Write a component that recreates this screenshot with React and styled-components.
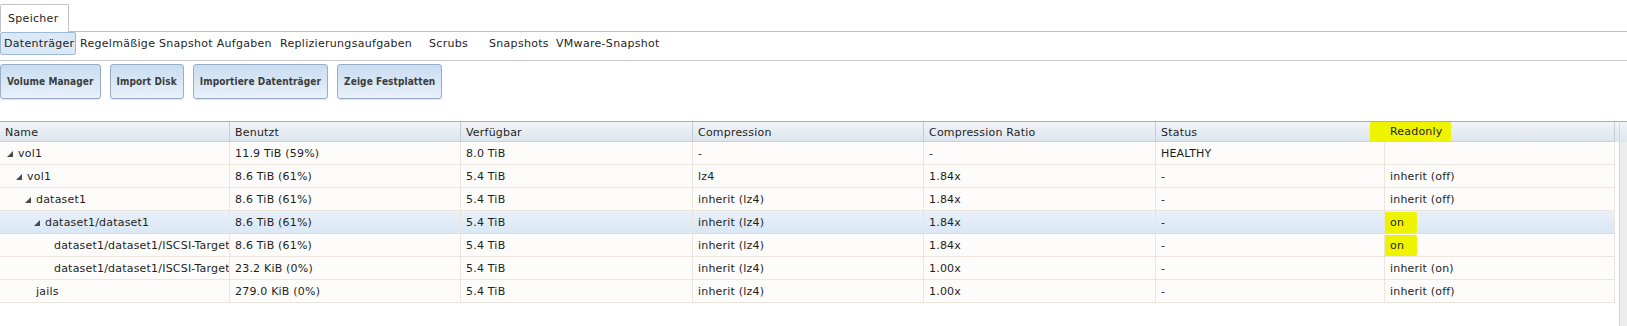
import React from "react";
import styled, { createGlobalStyle } from "styled-components";

const GlobalStyle = createGlobalStyle`
  body {
    margin: 0;
    background: #ffffff;
    font-family: "DejaVu Sans", Verdana, sans-serif;
    font-size: 11px;
    color: #1e1e1e;
  }
`;

const COLS = "230px 231px 232px 231px 232px 229px 230px";

const columns = [
  "Name",
  "Benutzt",
  "Verfügbar",
  "Compression",
  "Compression Ratio",
  "Status",
  "Readonly",
];

const rows = [
  { name: "vol1", level: 0, open: true, used: "11.9 TiB (59%)", avail: "8.0 TiB", comp: "-", ratio: "-", status: "HEALTHY", ro: "" },
  { name: "vol1", level: 1, open: true, used: "8.6 TiB (61%)", avail: "5.4 TiB", comp: "lz4", ratio: "1.84x", status: "-", ro: "inherit (off)" },
  { name: "dataset1", level: 2, open: true, used: "8.6 TiB (61%)", avail: "5.4 TiB", comp: "inherit (lz4)", ratio: "1.84x", status: "-", ro: "inherit (off)" },
  { name: "dataset1/dataset1", level: 3, open: true, selected: true, used: "8.6 TiB (61%)", avail: "5.4 TiB", comp: "inherit (lz4)", ratio: "1.84x", status: "-", ro: "on", mark: true },
  { name: "dataset1/dataset1/ISCSI-Target", level: 4, used: "8.6 TiB (61%)", avail: "5.4 TiB", comp: "inherit (lz4)", ratio: "1.84x", status: "-", ro: "on", mark: true },
  { name: "dataset1/dataset1/ISCSI-Target2", level: 4, used: "23.2 KiB (0%)", avail: "5.4 TiB", comp: "inherit (lz4)", ratio: "1.00x", status: "-", ro: "inherit (on)" },
  { name: "jails", level: 2, used: "279.0 KiB (0%)", avail: "5.4 TiB", comp: "inherit (lz4)", ratio: "1.00x", status: "-", ro: "inherit (off)" },
];

const subtabs = [
  { label: "Datenträger", w: 76 },
  { label: "Regelmäßige Snapshot Aufgaben", w: 200 },
  { label: "Replizierungsaufgaben", w: 149 },
  { label: "Scrubs", w: 60 },
  { label: "Snapshots", w: 67 },
  { label: "VMware-Snapshot", w: 112 },
];

const buttons = [
  "Volume Manager",
  "Import Disk",
  "Importiere Datenträger",
  "Zeige Festplatten",
];

const Expander = () => (
  <svg width="6" height="6" viewBox="0 0 6 6">
    <polygon points="0,6 6,0 6,6" fill="#4a4a4a" />
  </svg>
);

const App = () => {
  return (
    <Page>
      <GlobalStyle />
      <TabStrip>
        <Tab>Speicher</Tab>
      </TabStrip>
      <SubtabBar>
        {subtabs.map((t, i) => (
          <Subtab key={t.label} w={t.w} active={i === 0}>
            {t.label}
          </Subtab>
        ))}
      </SubtabBar>
      <ButtonBar>
        {buttons.map((label) => (
          <ActionButton key={label}>{label}</ActionButton>
        ))}
      </ButtonBar>
      <TableWrap>
        <Grid>
          <HeaderRow>
            {columns.map((col) => (
              <HeaderCell key={col}>
                {col === "Readonly" ? <Marker>{col}</Marker> : col}
              </HeaderCell>
            ))}
          </HeaderRow>
          {rows.map((row, i) => (
            <Row key={i} selected={row.selected}>
              <NameCell level={row.level}>
                <Toggle>{row.open ? <Expander /> : null}</Toggle>
                <Clip>{row.name}</Clip>
              </NameCell>
              <Cell>{row.used}</Cell>
              <Cell>{row.avail}</Cell>
              <Cell>{row.comp}</Cell>
              <Cell>{row.ratio}</Cell>
              <Cell>{row.status}</Cell>
              <Cell>{row.mark ? <OnMark>{row.ro}</OnMark> : row.ro}</Cell>
            </Row>
          ))}
        </Grid>
        <Gutter>
          <GutterHead />
        </Gutter>
        <Scrollbar>
          <ScrollHead />
        </Scrollbar>
      </TableWrap>
    </Page>
  );
};

const Page = styled.div`
  width: 1627px;
  height: 326px;
  overflow: hidden;
`;

const TabStrip = styled.div`
  display: flex;
  align-items: flex-end;
  height: 32px;
  padding-top: 3px;
  box-sizing: border-box;
  border-bottom: 1px solid #bfbfbf;
`;

const Tab = styled.div`
  width: 69px;
  height: 28px;
  box-sizing: border-box;
  margin-bottom: -1px;
  padding-left: 7px;
  line-height: 27px;
  background: #ffffff;
  border: 1px solid #c4c4c4;
  border-bottom: none;
  border-radius: 2px 2px 0 0;
  letter-spacing: 0.3px;
  color: #1e1e1e;
`;

const SubtabBar = styled.div`
  display: flex;
  align-items: flex-start;
  height: 28px;
  border-bottom: 1px solid #c9c9c9;
`;

const Subtab = styled.div`
  width: ${(p) => p.w}px;
  flex: none;
  height: 23px;
  box-sizing: border-box;
  padding-left: 3px;
  line-height: 21px;
  border: 1px solid ${(p) => (p.active ? "#9db9d8" : "transparent")};
  border-radius: 2px;
  background: ${(p) => (p.active ? "#dbe8f8" : "transparent")};
  letter-spacing: 0.3px;
  color: #1e1e1e;
  white-space: nowrap;
`;

const ButtonBar = styled.div`
  display: flex;
  gap: 9px;
  padding-top: 3px;
  margin-bottom: 22px;
`;

const ActionButton = styled.button`
  height: 35px;
  padding: 0 6px;
  border: 1px solid #98adc6;
  border-radius: 3px;
  background: linear-gradient(#c8dcf1, #e9f1fb);
  box-shadow: 0 1px 1px rgba(0, 0, 0, 0.12);
  font-family: "DejaVu Sans Condensed", "DejaVu Sans", sans-serif;
  font-weight: bold;
  font-size: 10px;
  letter-spacing: 0.1px;
  color: #3c3c3c;
  cursor: pointer;
`;

const TableWrap = styled.div`
  display: flex;
  align-items: stretch;
  height: 205px;
`;

const Grid = styled.div`
  width: 1615px;
`;

const HeaderRow = styled.div`
  display: grid;
  grid-template-columns: ${COLS};
  height: 21px;
  box-sizing: border-box;
  border-top: 1px solid #a7b0ba;
  border-bottom: 1px solid #c9d2dc;
  background: linear-gradient(#f1f4f8, #dde5ee);
`;

const HeaderCell = styled.div`
  display: flex;
  align-items: center;
  padding-left: 5px;
  border-right: 1px solid #c4ccd5;
  letter-spacing: 0.2px;
  color: #1e1e1e;
  white-space: nowrap;
`;

const Row = styled.div`
  display: grid;
  grid-template-columns: ${COLS};
  height: 23px;
  box-sizing: border-box;
  border-bottom: 1px solid ${(p) => (p.selected ? "#d3dfec" : "#ece5dc")};
  background: ${(p) =>
    p.selected ? "linear-gradient(#e8f0fa, #dae7f5)" : "#fdfcfa"};
`;

const Cell = styled.div`
  display: flex;
  align-items: center;
  padding-left: 5px;
  border-right: 1px solid #ece5dc;
  white-space: nowrap;
  overflow: hidden;
  letter-spacing: 0.2px;
  color: #1e1e1e;
`;

const NameCell = styled(Cell)`
  padding-left: ${(p) => 7 + p.level * 9}px;
  padding-right: 0;
`;

const Toggle = styled.span`
  display: inline-flex;
  align-items: center;
  width: 11px;
  flex: none;
  margin-top: 2px;
`;

const Clip = styled.span`
  overflow: hidden;
  white-space: nowrap;
`;

const Marker = styled.span`
  margin-left: -20px;
  padding: 3px 8px 4px 20px;
  background: #eef400;
  border-radius: 2px;
`;

const OnMark = styled.span`
  margin-left: -12px;
  padding: 4px 13px 4px 12px;
  background: #eef400;
  border-radius: 2px;
`;

const Gutter = styled.div`
  width: 4px;
`;

const GutterHead = styled.div`
  height: 21px;
  box-sizing: border-box;
  border-top: 1px solid #a7b0ba;
  background: linear-gradient(#f1f4f8, #dde5ee);
`;

const Scrollbar = styled.div`
  flex: 1;
  background: #ececec;
  border-left: 1px solid #d6d6d6;
`;

const ScrollHead = styled.div`
  height: 21px;
  box-sizing: border-box;
  border-top: 1px solid #a7b0ba;
  background: linear-gradient(#f1f4f8, #dde5ee);
`;

export default App;
